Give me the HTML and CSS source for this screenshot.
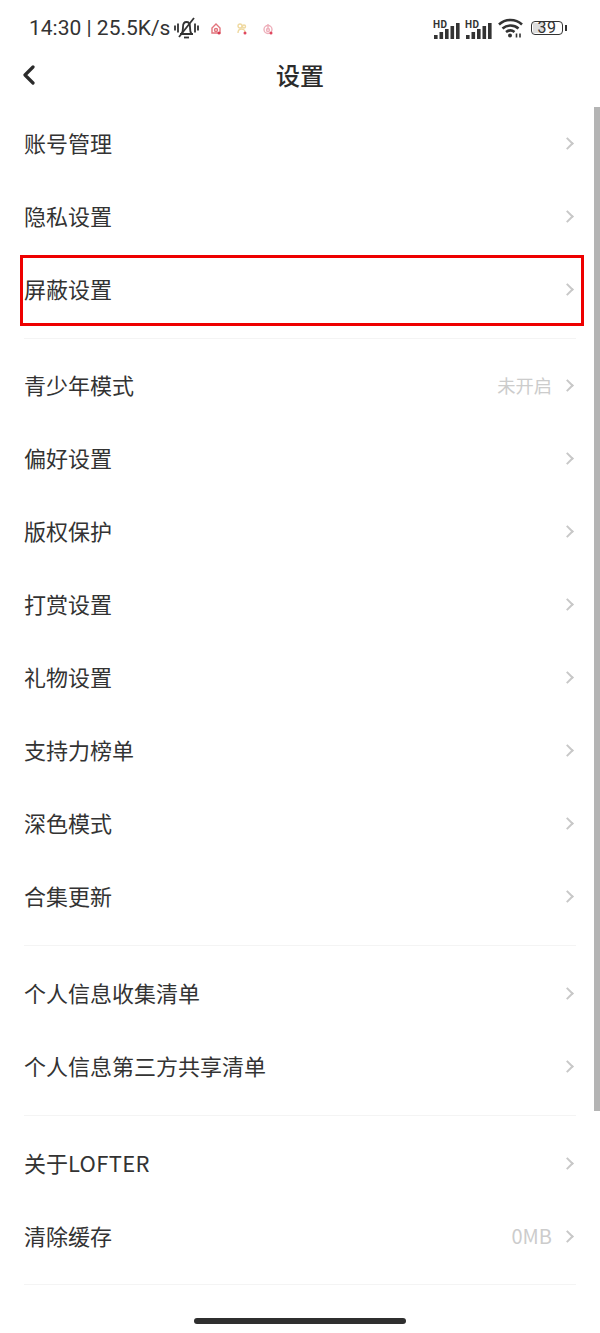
FILE: index.html
```html
<!DOCTYPE html>
<html lang="zh-CN">
<head>
    <meta charset="UTF-8">
    <meta name="viewport" content="width=device-width, initial-scale=1.0">
    <title>设置</title>
    <link rel="stylesheet" href="styles.css">
</head>
<body>
    <div class="status-bar">
        <div class="status-left">
            <span class="status-text">14:30 | 25.5K/s</span>
            <svg class="bell" width="25" height="24" viewBox="0 0 25 24" fill="none" stroke="#333" stroke-width="1.800">
                <path d="M6 18h13M7.500 18c1.500-2 1.500-4 1.500-7 0-3 1.500-5 3.500-5s3.500 2 3.500 5c0 3 0 5 1.500 7"/>
                <path d="M10 21.500h5"/>
                <path d="M20 2L5 21"/>
                <path d="M1 9.500v5M4 7.500v9M21 7.500v9M24 9.500v5"/>
            </svg>
            <svg class="app-icon" width="10" height="12" viewBox="0 0 10 12" fill="none" stroke="#e2747c" stroke-width="1.400">
                <path d="M1 10V5l4-4 4 4v5z"/>
                <circle cx="5" cy="7" r="1.500"/>
                <circle cx="8" cy="10" r="1.500" fill="#d83a52" stroke="none"/>
            </svg>
            <svg class="app-icon" width="10" height="12" viewBox="0 0 10 12" fill="none" stroke="#efd9a0" stroke-width="1.400">
                <circle cx="3" cy="3" r="2"/>
                <circle cx="7" cy="3.500" r="1.500"/>
                <path d="M1 10c0-3 2-4 3.500-4S8 7 8 9"/>
                <circle cx="8" cy="10" r="1.500" fill="#e0475f" stroke="none"/>
            </svg>
            <svg class="app-icon" width="10" height="12" viewBox="0 0 10 12" fill="none" stroke="#eeb0bb" stroke-width="1.400">
                <circle cx="5" cy="6.500" r="4"/>
                <path d="M5 1v5.500"/>
                <circle cx="5" cy="7" r="1.500"/>
                <circle cx="8" cy="10" r="1.500" fill="#e0475f" stroke="none"/>
            </svg>
        </div>
        <div class="status-right">
            <div class="signal">
                <span class="hd">HD</span>
                <svg width="26" height="16" viewBox="0 0 26 16" fill="#333"><rect x="0" y="12" width="3.600" height="4"/><rect x="5.500" y="9" width="3.600" height="7"/><rect x="11" y="6" width="3.600" height="10"/><rect x="16.500" y="3" width="3.600" height="13"/><rect x="22" y="0" width="3.600" height="16"/></svg>
            </div>
            <div class="signal">
                <span class="hd">HD</span>
                <svg width="26" height="16" viewBox="0 0 26 16" fill="#333"><rect x="0" y="12" width="3.600" height="4"/><rect x="5.500" y="9" width="3.600" height="7"/><rect x="11" y="6" width="3.600" height="10"/><rect x="16.500" y="3" width="3.600" height="13"/><rect x="22" y="0" width="3.600" height="16"/></svg>
            </div>
            <svg class="wifi" width="25" height="20" viewBox="0 0 25 20" fill="none" stroke="#333" stroke-width="2.600">
                <path d="M1 6.500c6.500-6 16.500-6 23 0"/>
                <path d="M4.500 10.500c4.500-4 11.500-4 16 0"/>
                <path d="M8 14c2.700-2 6-2 8.500 0"/>
                <circle cx="12" cy="17.500" r="2" fill="#333" stroke="none"/>
                <path d="M18.500 15.500v4M22 15.500v4" stroke-width="1.600"/>
            </svg>
            <div class="battery">
                <div class="battery-body">
                    <span class="battery-level"></span>
                    <span class="battery-num">39</span>
                </div>
                <span class="battery-tip"></span>
            </div>
        </div>
    </div>

    <div class="nav-bar">
        <svg class="back" width="14" height="20" viewBox="0 0 14 20" fill="none" stroke="#2b2b2b" stroke-width="3.200" stroke-linecap="round" stroke-linejoin="round">
            <path d="M11 2L3 10l8 8"/>
        </svg>
        <h1 class="nav-title">设置</h1>
    </div>

    <div class="group group-first">
        <div class="row"><span class="row-label">账号管理</span><span class="row-right"><span class="chevron"></span></span></div>
        <div class="row"><span class="row-label">隐私设置</span><span class="row-right"><span class="chevron"></span></span></div>
        <div class="row row-marked"><span class="row-label">屏蔽设置</span><span class="row-right"><span class="chevron"></span></span></div>
    </div>

    <div class="group">
        <div class="row"><span class="row-label">青少年模式</span><span class="row-right"><span class="row-value">未开启</span><span class="chevron"></span></span></div>
        <div class="row"><span class="row-label">偏好设置</span><span class="row-right"><span class="chevron"></span></span></div>
        <div class="row"><span class="row-label">版权保护</span><span class="row-right"><span class="chevron"></span></span></div>
        <div class="row"><span class="row-label">打赏设置</span><span class="row-right"><span class="chevron"></span></span></div>
        <div class="row"><span class="row-label">礼物设置</span><span class="row-right"><span class="chevron"></span></span></div>
        <div class="row"><span class="row-label">支持力榜单</span><span class="row-right"><span class="chevron"></span></span></div>
        <div class="row"><span class="row-label">深色模式</span><span class="row-right"><span class="chevron"></span></span></div>
        <div class="row"><span class="row-label">合集更新</span><span class="row-right"><span class="chevron"></span></span></div>
    </div>

    <div class="group">
        <div class="row"><span class="row-label">个人信息收集清单</span><span class="row-right"><span class="chevron"></span></span></div>
        <div class="row"><span class="row-label">个人信息第三方共享清单</span><span class="row-right"><span class="chevron"></span></span></div>
    </div>

    <div class="group group-last">
        <div class="row"><span class="row-label">关于<span class="latin">LOFTER</span></span><span class="row-right"><span class="chevron"></span></span></div>
        <div class="row"><span class="row-label">清除缓存</span><span class="row-right"><span class="row-value row-value-num">0MB</span><span class="chevron"></span></span></div>
    </div>

    <div class="scrollbar"></div>
    <div class="home-indicator"></div>
</body>
</html>
```

FILE: styles.css
```css
html, body {
    margin: 0;
    padding: 0;
}
body {
    position: relative;
    width: 600px;
    height: 1333px;
    overflow: hidden;
    background: #fff;
    font-family: "Noto Sans CJK SC", Roboto, sans-serif;
    color: #2f2f2f;
}
.status-bar {
    height: 55px;
    padding: 0 33px 0 29px;
    display: flex;
    justify-content: space-between;
    align-items: center;
}
.status-left, .status-right {
    display: flex;
    align-items: center;
}
.status-text {
    font-family: Roboto, sans-serif;
    font-size: 21px;
    color: #333;
}
.bell {
    margin-left: 4px;
}
.app-icon {
    margin-left: 16px;
    margin-top: 2px;
}
.bell + .app-icon {
    margin-left: 12px;
}
.status-right {
    gap: 6px;
}
.signal {
    position: relative;
    width: 26px;
    height: 16px;
}
.hd {
    position: absolute;
    left: -1px;
    top: 0;
    font-family: Roboto, sans-serif;
    font-size: 10px;
    font-weight: 700;
    letter-spacing: 0.5px;
    line-height: 10px;
    color: #333;
}
.battery {
    display: flex;
    align-items: center;
    gap: 2px;
    margin-left: 2px;
}
.battery-body {
    position: relative;
    width: 30px;
    height: 12px;
    border: 1.500px solid #333;
    border-radius: 4px;
    display: flex;
    align-items: center;
    justify-content: center;
}
.battery-level {
    position: absolute;
    left: 1px;
    top: 1px;
    bottom: 1px;
    width: 11px;
    background: #ddd;
}
.battery-num {
    position: relative;
    font-family: Roboto, sans-serif;
    font-size: 16px;
    line-height: 12px;
    letter-spacing: 0.5px;
    color: #333;
}
.battery-tip {
    width: 2px;
    height: 6px;
    background: #333;
}
.nav-bar {
    height: 52px;
    padding-bottom: 0;
    position: relative;
    display: flex;
    align-items: center;
    justify-content: center;
}
.back {
    position: absolute;
    left: 22px;
    top: 10px;
}
.nav-title {
    margin: 0 0 14px;
    font-size: 24px;
    font-weight: 500;
    color: #2b2b2b;
}
.group {
    margin: 0 24px 11px;
    padding-bottom: 12px;
    border-bottom: 1px solid #f4f4f4;
}
.group-first {
    margin-bottom: 10px;
}
.group-last {
    padding-bottom: 11px;
}
.row {
    position: relative;
    height: 73px;
    display: flex;
    align-items: center;
    justify-content: space-between;
}
.row-label {
    font-size: 22px;
    line-height: 32px;
    padding-bottom: 4px;
    color: #333;
}
.latin {
    letter-spacing: 0.3px;
}
.row-right {
    display: flex;
    align-items: center;
}
.row-value {
    font-size: 18.300px;
    line-height: 26px;
    padding-bottom: 2px;
    color: #ccc;
    margin-right: 11px;
}
.row-value-num {
    font-size: 20px;
}
.chevron {
    width: 7px;
    height: 7px;
    border-top: 2px solid #c8c8c8;
    border-right: 2px solid #c8c8c8;
    transform: rotate(45deg);
    margin-right: 4px;
}
.row-marked::after {
    content: "";
    position: absolute;
    left: -4px;
    right: -8px;
    top: 2px;
    bottom: 0;
    border: 3px solid #ee0000;
}
.scrollbar {
    position: absolute;
    right: 0;
    top: 107px;
    width: 6px;
    height: 1004px;
    background: #b4b4b4;
}
.home-indicator {
    position: absolute;
    left: 194px;
    top: 1318px;
    width: 212px;
    height: 6px;
    border-radius: 3px;
    background: #2f2f2f;
}
```
